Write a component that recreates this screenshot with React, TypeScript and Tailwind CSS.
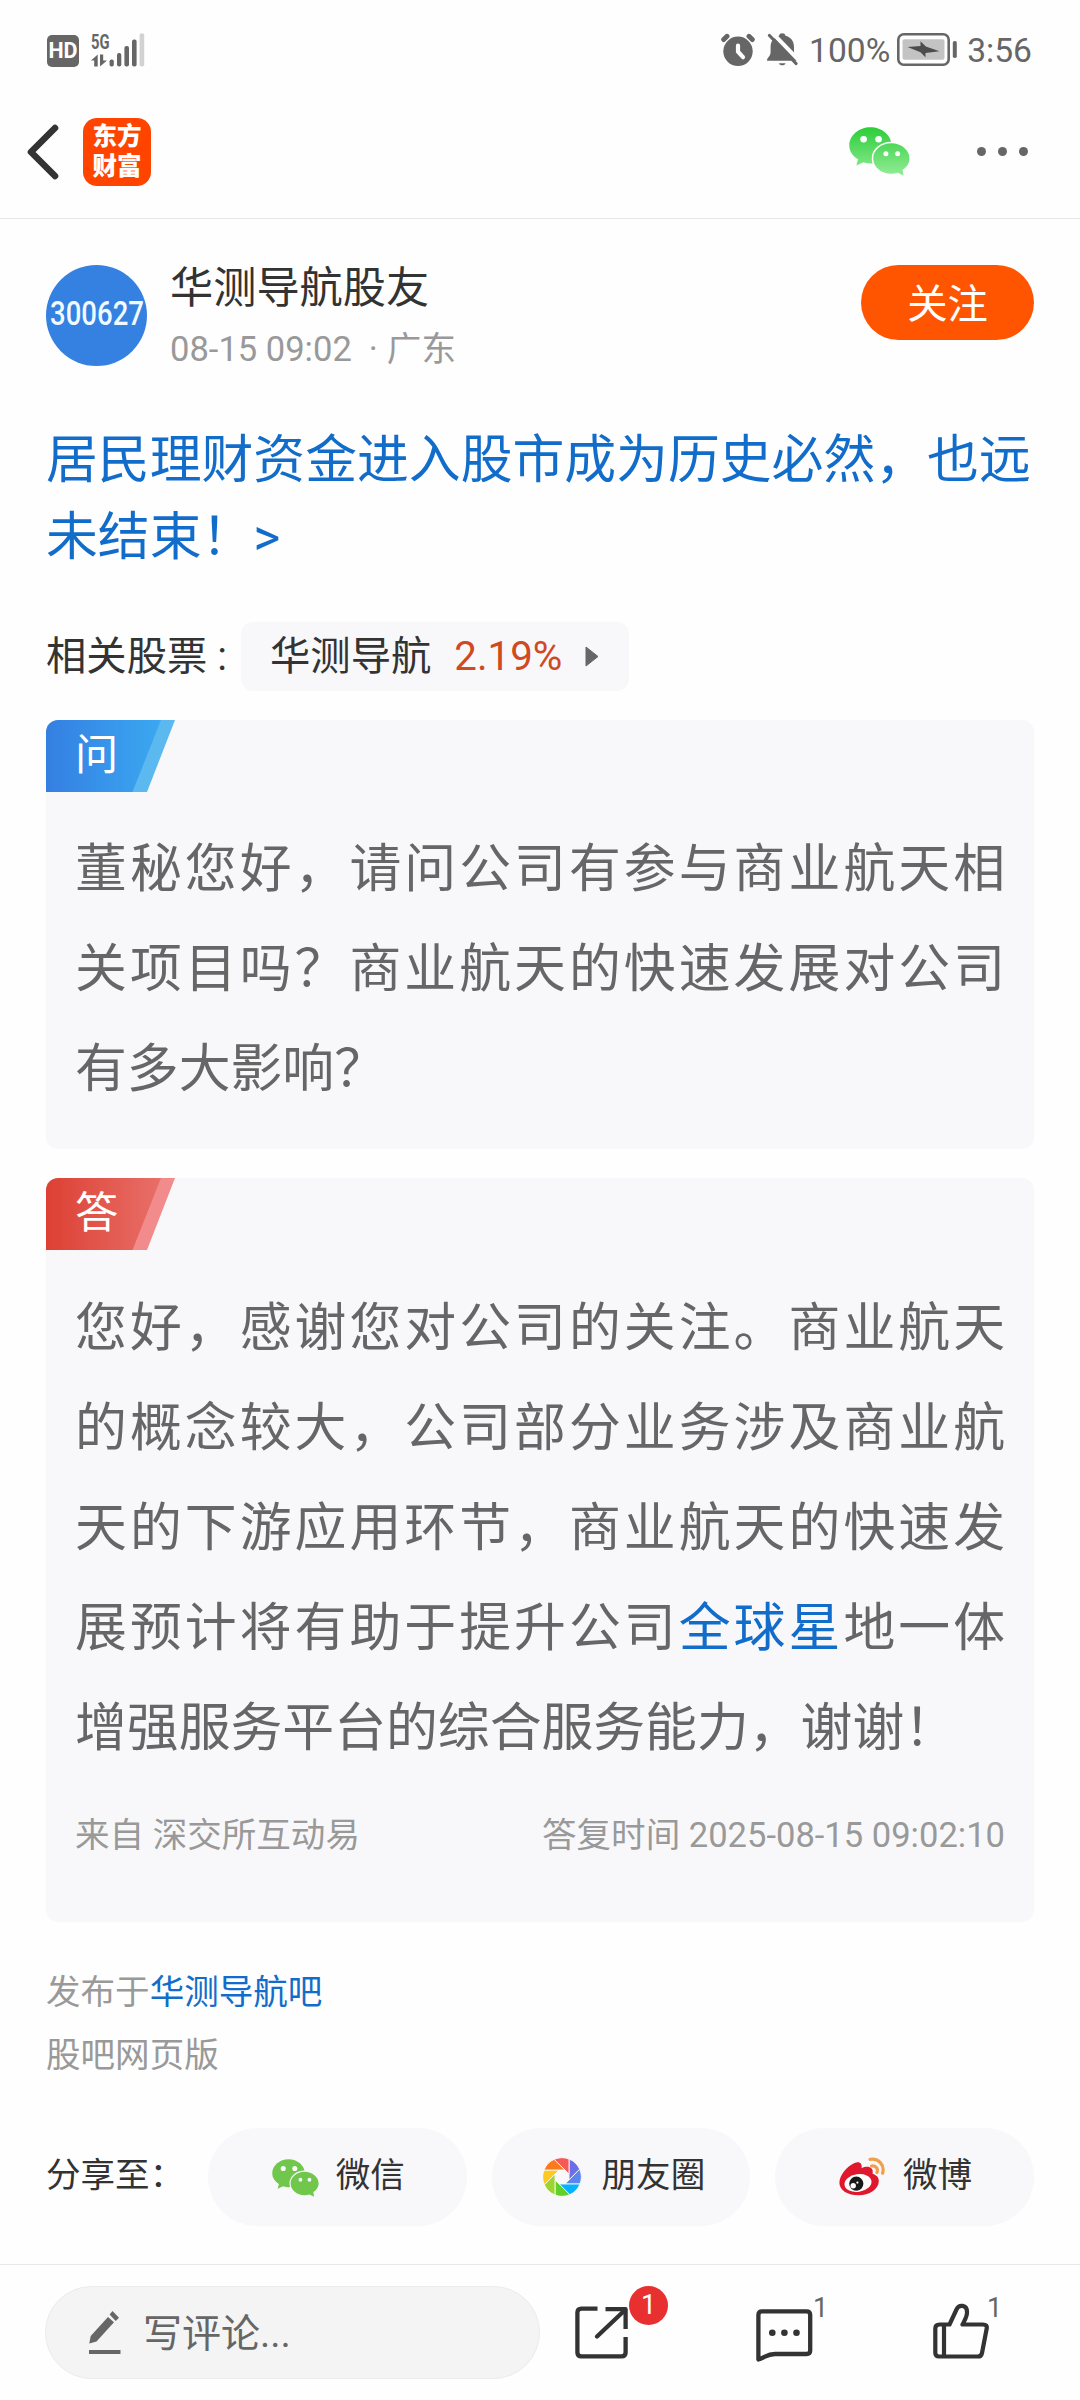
import React from "react";

// Post detail page: question / answer cards, share row and bottom comment bar.

const SHARE_TARGETS = [
  { name: "微信", icon: <WechatIcon className="w-[47px] h-[38px] mt-0.5" flat /> },
  { name: "朋友圈", icon: <MomentsIcon /> },
  { name: "微博", icon: <WeiboIcon /> },
];

export default function App() {
  return (
    <div className="w-[1080px] h-[2400px] bg-[#fefefe] text-[#333] font-['Roboto','Noto_Sans_CJK_SC',sans-serif] overflow-hidden">
      <StatusBar />
      <NavBar />
      <main className="h-[2045px] px-[46px] pt-[46px]">
        <Author />
        <h1 className="mt-[56px] text-[51.84px] leading-[77.4px] text-[#126dca]">
          居民理财资金进入股市成为历史必然，也远未结束！&gt;
        </h1>
        <div className="mt-[45px] h-[69px] flex items-center text-[40.32px] leading-[69px]">
          <span className="w-[195px] whitespace-nowrap">相关股票 :</span>
          <span className="h-[69px] w-[388px] pl-[29px] flex items-center rounded-xl bg-[#f8f8fa]">
            华测导航
            <span className="ml-[23px] text-[#cf4a22]">2.19%</span>
            <svg className="ml-[23px] w-3.5 h-[21px]" viewBox="0 0 14 21">
              <path d="M1 1L13 10.5L1 20Z" fill="#666" stroke="#666" strokeLinejoin="round" />
            </svg>
          </span>
        </div>

        <section className="mt-[29px] h-[429px] rounded-xl bg-[#f8f8fa] overflow-hidden">
          <Tag label="问" from="#347fe2" to="#3ba8f1" edge="#5cb9ef" />
          <p className="mt-[28px] px-[29px] text-[51.84px] leading-[100px] text-justify text-[#666]">
            董秘您好，请问公司有参与商业航天相关项目吗？商业航天的快速发展对公司有多大影响？
          </p>
        </section>

        <section className="mt-[29px] h-[744px] rounded-xl bg-[#f8f8fa] overflow-hidden">
          <Tag label="答" from="#dd4033" to="#e86f69" edge="#f28b8b" />
          <p className="mt-[29px] px-[29px] text-[51.84px] leading-[100px] text-justify text-[#666]">
            您好，感谢您对公司的关注。商业航天的概念较大，公司部分业务涉及商业航天的下游应用环节，商业航天的快速发展预计将有助于提升公司
            <span className="text-[#126dca]">全球星</span>
            地一体增强服务平台的综合服务能力，谢谢！
          </p>
          <div className="mt-[31px] px-[29px] flex justify-between text-[34.56px] leading-[50px] text-[#999]">
            <span>来自 深交所互动易</span>
            <span>答复时间 2025-08-15 09:02:10</span>
          </div>
        </section>

        <div className="mt-[39px] text-[34.56px] leading-[63.5px] text-[#999]">
          <p>
            发布于<span className="text-[#126dca]">华测导航吧</span>
          </p>
          <p>股吧网页版</p>
        </div>

        <div className="mt-[40px] flex items-center text-[34.56px] leading-[50px]">
          <span className="w-[162px] -mt-1 whitespace-nowrap">分享至：</span>
          <div className="flex gap-[25px]">
            {SHARE_TARGETS.map((t) => (
              <button key={t.name} className="w-[258.6px] h-[98px] pl-0.5 rounded-full bg-[#f8f8fa] flex items-center justify-center gap-[17px]">
                {t.icon}
                <span className="-mt-1">{t.name}</span>
              </button>
            ))}
          </div>
        </div>
      </main>
      <BottomBar />
    </div>
  );
}

function StatusBar() {
  return (
    <div className="h-[85px] pt-[14px] pl-[47px] pr-[48px] flex items-center justify-between text-[#666]">
      <div className="flex items-center gap-3">
        <span className="w-8 h-8 mt-0.5 rounded-[5px] bg-[#666] text-[#fefefe] text-[21.5px] leading-8 font-bold text-center">HD</span>
        <svg className="w-[54px] h-[34px] overflow-visible" viewBox="0 0 54 34" fill="#666">
          <text x="0" y="15.5" fontSize="20.5" fontWeight="700" textLength="18.5" lengthAdjust="spacingAndGlyphs">5G</text>
          <path d="M0 27.5L6.7 21.5V33.5H3.2V27.5Z" />
          <path d="M9 21.5H12.2V27.5H16L9 33.5Z" />
          <rect x="18.6" y="26.5" width="4.2" height="7" rx="1.8" />
          <rect x="26" y="20" width="4.3" height="13.5" rx="2" />
          <rect x="33.4" y="13" width="4.6" height="20.5" rx="2" />
          <rect x="41" y="6.5" width="4.6" height="27" rx="2" />
          <rect x="48.6" y="0.3" width="4.6" height="33.2" rx="2" fill="#d2d2d2" />
        </svg>
      </div>
      <div className="flex items-center text-[33.6px] leading-[34px]">
        <svg className="w-[34px] h-[33px]" viewBox="0 0 34 33" fill="none" strokeLinecap="round">
          <circle cx="17" cy="18.3" r="14.7" fill="#666" />
          <path d="M2.7 6.5L6 3.3M31.3 6.5L28 3.3" stroke="#666" strokeWidth="5" />
          <path d="M17 12.5V18.7L22 24.2" stroke="#fefefe" strokeWidth="4.2" />
        </svg>
        <svg className="ml-3 w-[31px] h-[33px]" viewBox="0 0 31 33">
          <path d="M0 27.7C0 24.5 3.6 23.5 3.6 19V14C3.6 8 7.5 4 12 2.8C12.5 -0.5 18 -0.5 18.5 2.8C23.5 4 27 8 27 14V19C27 23.5 30 24.5 30 27.7Z" fill="#666" />
          <path d="M12 30.2H18.5C18 33 12.5 33 12 30.2Z" fill="#666" />
          <path d="M5.5 0L34 29.5V24" stroke="#fefefe" strokeWidth="4" fill="none" />
          <path d="M2.5 2.5L29 30.5" stroke="#666" strokeWidth="3.2" strokeLinecap="round" />
        </svg>
        <span className="ml-[11px] mt-0.5">100%</span>
        <svg className="ml-[7px] w-[60px] h-[33px]" viewBox="0 0 60 33">
          <rect x="1.3" y="1.3" width="50.4" height="30.4" rx="5.5" fill="none" stroke="#666" strokeWidth="2.6" />
          <rect x="5.5" y="6.3" width="42" height="20.4" rx="2" fill="#c3c3c3" />
          <path d="M10.5 14L23.5 19.2L28.5 24.3V20L42.5 18.3L28.8 13.5L23.5 8.3V13Z" fill="#4c4c4c" />
          <rect x="55.8" y="8" width="4" height="17" rx="1.8" fill="#666" />
        </svg>
        <span className="ml-[10px] mt-0.5">3:56</span>
      </div>
    </div>
  );
}

function NavBar() {
  return (
    <header className="h-[134px] pl-[27px] pr-[52px] flex items-center justify-between border-b border-[#e8e8e8]">
      <div className="flex items-center gap-6">
        <svg className="w-8 h-14" viewBox="0 0 32 56" fill="none">
          <path d="M28 4L4 28L28 52" stroke="#333" strokeWidth="6.6" strokeLinecap="round" strokeLinejoin="round" />
        </svg>
        <div className="w-[68px] h-[68px] rounded-[14px] bg-[#ff4400] text-white text-[24.5px] leading-[29.4px] font-black flex flex-col items-center justify-center">
          <span>东方</span>
          <span>财富</span>
        </div>
      </div>
      <div className="flex items-center">
        <WechatIcon className="w-[61px] h-[49px]" />
        <span className="ml-[67px] flex gap-3">
          <i className="size-[9px] rounded-full bg-[#666]" />
          <i className="size-[9px] rounded-full bg-[#666]" />
          <i className="size-[9px] rounded-full bg-[#666]" />
        </span>
      </div>
    </header>
  );
}

function Author() {
  return (
    <div className="h-[101px] flex items-start">
      <div className="size-[101px] rounded-full bg-[#3581e2] text-[#f0faff] text-[34px] leading-[97px] font-medium flex justify-center">
        <span className="scale-x-[0.81]">300627</span>
      </div>
      <div className="ml-[23px] -mt-[5px] flex-1">
        <div className="text-[43.2px] leading-[58px]">华测导航股友</div>
        <div className="mt-[7px] flex text-[34.56px] leading-[48px] text-[#999]">
          <span>08-15 09:02</span>
          <span className="ml-[17px]">·</span>
          <span className="ml-[9px]">广东</span>
        </div>
      </div>
      <button className="w-[173px] h-[75px] rounded-full bg-[#ff5500] text-white text-[40.32px] leading-[79px]">关注</button>
    </div>
  );
}

function Tag({ label, from, to, edge }: { label: string; from: string; to: string; edge: string }) {
  return (
    <div className="relative w-[129px] h-[72px] pl-[29px] text-[43.2px] leading-[71px] text-white">
      <svg className="absolute inset-0 w-full h-full" viewBox="0 0 129 72">
        <defs>
          <linearGradient id={"tag" + label}>
            <stop offset="0" stopColor={from} />
            <stop offset="1" stopColor={to} />
          </linearGradient>
        </defs>
        <path d="M80 0H129L101 72H60Z" fill={edge} />
        <path d="M0 0H115L86.5 72H0Z" fill={`url(#tag${label})`} />
      </svg>
      <span className="relative">{label}</span>
    </div>
  );
}

function BottomBar() {
  return (
    <footer className="h-[136px] pl-[45px] flex items-start border-t border-[#e8e8e8]">
      <div className="mt-[21px] w-[495px] h-[93px] pl-[43px] rounded-full border border-[#ebebeb] bg-[#f4f4f4] flex items-center text-[39px] leading-[92px] text-[#666]">
        <svg className="w-8 h-[43px]" viewBox="0 0 32 43" fill="#666">
          <path d="M0.3 32.5L1.7 25L19 6L25 11.3L7.5 30.5Z" />
          <path d="M23.5 0L30 6.7L26.7 10L20.6 3.5Z" />
          <rect y="39" width="31.5" height="4" />
        </svg>
        <span className="ml-[22px] mt-0.5">写评论...</span>
      </div>

      <div className="relative ml-[35px] mt-[41px]">
        <svg className="w-[54px] h-[54px]" viewBox="0 0 54 54" fill="none" stroke="#333" strokeWidth="4.3">
          <path d="M22.5 2.6H6.5Q2.4 2.6 2.4 6.5V46.5Q2.4 50.4 6.5 50.4H46.5Q50.6 50.4 50.6 46.5V31" />
          <path d="M30.5 3.2H50.6V23" strokeLinejoin="round" />
          <path d="M22 30.5L50 4" strokeLinecap="round" />
        </svg>
        <span className="absolute -top-5 left-[54px] size-[39px] rounded-full bg-[#e83030] text-white text-[27px] leading-[38px] text-center">1</span>
      </div>

      <div className="relative ml-[127px] mt-[44px]">
        <svg className="w-[57px] h-[54px]" viewBox="0 0 57 54" fill="none" stroke="#333" strokeWidth="4.3" strokeLinejoin="round">
          <path d="M2.4 50.5V6Q2.4 2.4 6 2.4H50.5Q54.2 2.4 54.2 6V41.5Q54.2 45 50.5 45H19C11 45 9 48.5 2.4 50.5Z" />
          <g fill="#333" stroke="none">
            <circle cx="16.3" cy="23.8" r="3.3" />
            <circle cx="28.4" cy="23.8" r="3.3" />
            <circle cx="40.5" cy="23.8" r="3.3" />
          </g>
        </svg>
        <span className="absolute -top-[17px] left-[57px] text-[27px] leading-8 text-[#666]">1</span>
      </div>

      <div className="relative ml-[120px] mt-[38px]">
        <svg className="w-[57px] h-[56px]" viewBox="0 0 57 56" fill="none" stroke="#333" strokeWidth="4.2" strokeLinejoin="round">
          <path d="M6.5 21.5H16.5L23.5 6.5C25.8 1.2 34.2 1.2 34 9.5C34 14 31.5 17.5 29.5 21.5H50Q54.5 21.5 53.7 25.5L49 50Q48.3 53.5 45 53.5H6Q2.3 53.5 2.3 50V25.5Q2.3 21.5 6.5 21.5Z" />
          <path d="M11 21.5V53.5" />
        </svg>
        <span className="absolute -top-[11px] left-[54px] text-[27px] leading-8 text-[#666]">1</span>
      </div>
    </footer>
  );
}

function WechatIcon({ className, flat }: { className: string; flat?: boolean }) {
  const fill = flat ? "#70c74c" : "url(#wechat)";
  const gap = flat ? "#f8f8fa" : "#fefefe";
  return (
    <svg className={className} viewBox="0 0 61 49">
      <defs>
        <linearGradient id="wechat" gradientUnits="userSpaceOnUse" x1="0" y1="0" x2="0" y2="49">
          <stop offset="0" stopColor="#2ccd38" />
          <stop offset="1" stopColor="#93ec98" />
        </linearGradient>
      </defs>
      <path d="M21.4 0.3C33 0.3 42.6 8.5 42.6 18.4S33 36.5 21.4 36.5Q18 36.5 14.5 35.3L7.3 38.6L9 32.2C3.5 29 0.3 24 0.3 18.4C0.3 8.5 10 0.3 21.4 0.3Z" fill={fill} />
      <path d="M42.3 16.3C52.2 16.3 60.5 23 60.5 31.5C60.5 36 58 40 53.6 42.8L54.6 48.7L48.8 45.8Q45.5 46.8 42.3 46.8C32.2 46.8 24.2 40 24.2 31.5S32.2 16.3 42.3 16.3Z" fill={fill} stroke={gap} strokeWidth="3" paintOrder="stroke" />
      <g fill={gap}>
        <circle cx="14.6" cy="12.2" r="3.3" />
        <circle cx="29.6" cy="12.2" r="3.3" />
        <circle cx="36.9" cy="26.8" r="2.5" />
        <circle cx="48.6" cy="26.8" r="2.5" />
      </g>
    </svg>
  );
}

const BLADES = ["#6b6de9", "#5a86ef", "#04b2ff", "#62d028", "#9dd42d", "#fdc91f", "#fb7a1d", "#f65a58"];

// Camera aperture: eight blades around an octagonal hole.
function MomentsIcon() {
  const hole = 7;
  const outer = 19.3;
  const t = hole * Math.tan(Math.PI / 8);
  const reach = Math.sqrt(outer * outer - hole * hole);
  const point = (i: number, along: number) => {
    const a = (i * Math.PI) / 4;
    const x = hole * Math.cos(a) + along * Math.sin(a);
    const y = hole * Math.sin(a) - along * Math.cos(a);
    return `${x.toFixed(2)} ${y.toFixed(2)}`;
  };
  return (
    <svg className="w-[46px] h-10" viewBox="-23 -20 46 40">
      {BLADES.map((color, i) => (
        <path
          key={color}
          d={`M${point(i, -t)}L${point(i, reach)}A${outer} ${outer} 0 0 1 ${point(i + 1, reach)}Z`}
          fill={color}
          stroke="#f8f8fa"
          strokeWidth="0.9"
        />
      ))}
    </svg>
  );
}

function WeiboIcon() {
  return (
    <svg className="w-[47px] h-[39px]" viewBox="0 0 47 39">
      <path d="M0.4 25.5C0.6 18 8 9.5 15 6.3C20 4 23.5 6 22.6 11.3C28 8.5 35 9.5 33.6 16.8C37.5 18 40 20.5 39.8 24.5C39.5 32 30.5 38.3 19.5 38.3C9 38.3 0.2 33.5 0.4 25.5Z" fill="#e0182d" />
      <ellipse cx="19" cy="26" rx="13.6" ry="8.8" fill="#fff" transform="rotate(-8 19 26)" />
      <circle cx="17.3" cy="26.7" r="7.1" fill="#191919" />
      <circle cx="14.2" cy="28.8" r="2.7" fill="#fff" />
      <circle cx="18.4" cy="25.6" r="1.1" fill="#fff" />
      <path d="M31 2.3C39.5 0.8 46 8 43.6 16.2M32.5 9C36.8 8.4 39.5 11.8 38 15.5" fill="none" stroke="#f0a04c" strokeWidth="3.2" strokeLinecap="round" />
    </svg>
  );
}
